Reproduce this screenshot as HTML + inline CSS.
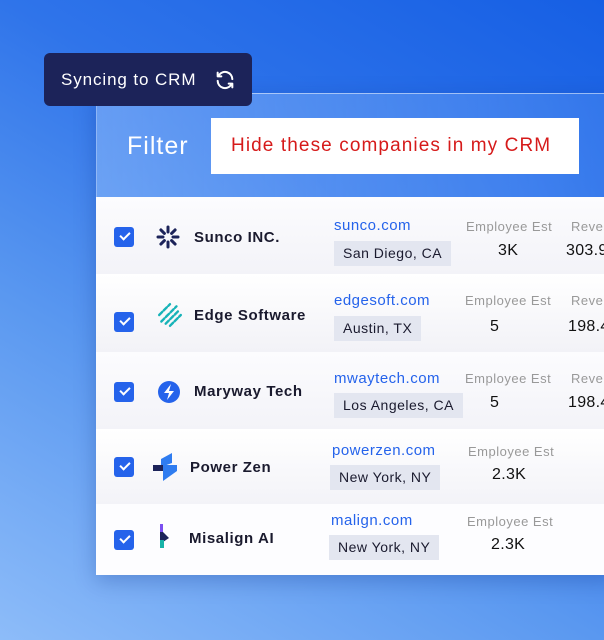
<!DOCTYPE html>
<html><head><meta charset="utf-8"><style>
*{margin:0;padding:0;box-sizing:border-box}
body{width:604px;height:640px;overflow:hidden;position:relative;font-family:"Liberation Sans",sans-serif;
background:linear-gradient(30deg,#8dbcf9 0%,#5a98f0 35%,#2f74ea 65%,#165fe4 100%);}
.badge{position:absolute;left:44px;top:53px;width:208px;height:53px;background:#1c2359;border-radius:6px;color:#fff;font-size:17px;letter-spacing:.9px;padding:17px 0 0 17px;z-index:3}
.panel{position:absolute;left:96px;top:93px;width:520px;height:482px;box-shadow:0 6px 20px rgba(0,30,120,.25)}
.head{height:104px;background:linear-gradient(90deg,rgba(140,185,250,.55),rgba(90,150,245,.35));border-top:1px solid rgba(255,255,255,.5);border-left:1px solid rgba(255,255,255,.4);position:relative}
.head .f{position:absolute;left:30px;top:38px;color:#fff;font-size:25px;letter-spacing:1px}
.head .b{position:absolute;left:114px;top:24px;width:368px;height:56px;background:#fff;color:#d61a1a;font-size:19px;padding:17px 0 0 20px;letter-spacing:1.1px}
.row{position:absolute;left:0;width:520px;background:linear-gradient(180deg,#fcfcfe,#f3f3f8)}
.cb{position:absolute;left:18px;width:20px;height:20px;background:#2563eb;border-radius:3px}
.cb:after{content:"";position:absolute;left:6px;top:5px;width:8px;height:4px;border-left:2px solid #fff;border-bottom:2px solid #fff;transform:rotate(-45deg)}
.lg{position:absolute;width:24px;height:24px}
.nm{position:absolute;font-weight:bold;font-size:15px;letter-spacing:.6px;color:#1a1a2e}
.dm{position:absolute;color:#2563eb;font-size:15px;letter-spacing:.5px}
.tg{position:absolute;background:#e3e6f0;color:#1a1a2e;font-size:14px;letter-spacing:.5px;padding:4px 9px;height:25px}
.el{position:absolute;color:#999;font-size:13px;letter-spacing:.5px}
.ev{position:absolute;color:#111;font-size:16px;letter-spacing:.3px}
</style></head><body>
<div class="badge">Syncing to CRM
<svg style="position:absolute;left:170px;top:16px" width="22" height="22" viewBox="0 0 24 24" fill="none" stroke="#fff" stroke-width="2.2" stroke-linecap="round" stroke-linejoin="round"><path d="M20 11a8 8 0 0 0-14.5-4.5M4 4v4h4"/><path d="M4 13a8 8 0 0 0 14.5 4.5M20 20v-4h-4"/></svg></div>
<div class="panel">
<div class="head"><div class="f">Filter</div><div class="b">Hide these companies in my CRM</div></div>

<div class="row" style="top:104px;height:77px">
<div class="cb" style="top:30px"></div>
<svg class="lg" style="left:60px;top:28px" viewBox="0 0 24 24" stroke="#1c2359" stroke-width="3" stroke-linecap="round"><g><path d="M12 2v5M12 17v5M2 12h5M17 12h5M4.9 4.9l3.5 3.5M15.6 15.6l3.5 3.5M4.9 19.1l3.5-3.5M15.6 8.4l3.5-3.5"/></g></svg>
<div class="nm" style="left:98px;top:32px">Sunco INC.</div>
<div class="dm" style="left:238px;top:20px">sunco.com</div>
<div class="tg" style="left:238px;top:44px">San Diego, CA</div>
<div class="el" style="left:370px;top:22px">Employee Est</div>
<div class="ev" style="left:402px;top:45px">3K</div>
<div class="el" style="left:475px;top:22px">Revenue</div>
<div class="ev" style="left:470px;top:45px">303.9</div>
</div>

<div class="row" style="top:181px;height:78px;background:linear-gradient(180deg,#fff,#f2f2f7)">
<div class="cb" style="top:38px"></div>
<svg class="lg" style="left:61px;top:28px;width:26px;height:26px" viewBox="0 0 24 24" stroke="#17b3b8" stroke-width="2.2" stroke-linecap="round" stroke-dasharray="4 2"><path d="M2 12l10-10M4 18l14-14M8 20l12-12M12 22l10-10"/></svg>
<div class="nm" style="left:98px;top:33px">Edge Software</div>
<div class="dm" style="left:238px;top:18px">edgesoft.com</div>
<div class="tg" style="left:238px;top:42px">Austin, TX</div>
<div class="el" style="left:369px;top:19px">Employee Est</div>
<div class="ev" style="left:394px;top:44px">5</div>
<div class="el" style="left:475px;top:19px">Revenue</div>
<div class="ev" style="left:472px;top:44px">198.4</div>
</div>

<div class="row" style="top:259px;height:77px">
<div class="cb" style="top:30px"></div>
<svg class="lg" style="left:61px;top:28px" viewBox="0 0 24 24"><circle cx="12" cy="12" r="11" fill="#2563eb"/><path d="M14 4l-7 9h5l-2 7 7-9h-5z" fill="#fff"/></svg>
<div class="nm" style="left:98px;top:31px">Maryway Tech</div>
<div class="dm" style="left:238px;top:18px">mwaytech.com</div>
<div class="tg" style="left:238px;top:41px">Los Angeles, CA</div>
<div class="el" style="left:369px;top:19px">Employee Est</div>
<div class="ev" style="left:394px;top:42px">5</div>
<div class="el" style="left:475px;top:19px">Revenue</div>
<div class="ev" style="left:472px;top:42px">198.4</div>
</div>

<div class="row" style="top:336px;height:75px;background:linear-gradient(180deg,#fff,#f3f3f8)">
<div class="cb" style="top:28px"></div>
<svg class="lg" style="left:57px;top:24px;width:26px;height:28px" viewBox="0 0 26 28"><path d="M8 6l11-6v10l-11 4z" fill="#2f7cf0"/><path d="M0 12h10v6H0z" fill="#1c2359"/><path d="M10 12h14v6l-14 10z" fill="#2f7cf0"/></svg>
<div class="nm" style="left:94px;top:30px">Power Zen</div>
<div class="dm" style="left:236px;top:13px">powerzen.com</div>
<div class="tg" style="left:234px;top:36px">New York, NY</div>
<div class="el" style="left:372px;top:15px">Employee Est</div>
<div class="ev" style="left:396px;top:37px">2.3K</div>
</div>

<div class="row" style="top:411px;height:71px;background:#fdfdff">
<div class="cb" style="top:26px"></div>
<svg class="lg" style="left:62px;top:20px;width:14px;height:26px" viewBox="0 0 14 26"><path d="M2 0h3v8H2z" fill="#7b4ff0"/><path d="M2 8h3l6 6-6 4H2z" fill="#1c2359"/><path d="M2 16h4v8H2z" fill="#17b3a8"/></svg>
<div class="nm" style="left:93px;top:26px">Misalign AI</div>
<div class="dm" style="left:235px;top:8px">malign.com</div>
<div class="tg" style="left:233px;top:31px">New York, NY</div>
<div class="el" style="left:371px;top:10px">Employee Est</div>
<div class="ev" style="left:395px;top:32px">2.3K</div>
</div>
</div>
</body></html>
